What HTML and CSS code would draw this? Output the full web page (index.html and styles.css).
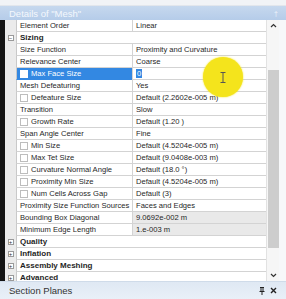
FILE: index.html
```html
<!DOCTYPE html>
<html lang="en">
<head>
  <meta charset="UTF-8">
  <title>Details of "Mesh"</title>
  <link rel="stylesheet" href="styles.css">
</head>
<body>

  <div class="top"></div>
  <div class="titulo">
    <span>Details of "Mesh"</span>
    <span class="pin-claro">&#x2020;</span>
  </div>

  <div class="cuerpo">
    <div class="borde"></div>

    <div class="tabla">
      <div class="fila"><span class="margen"></span><span class="nombre">Element Order</span><span class="valor">Linear</span></div>
      <div class="fila grupo"><span class="margen"><i class="caja">&minus;</i></span><span class="cabecera">Sizing</span></div>
      <div class="fila"><span class="margen"></span><span class="nombre">Size Function</span><span class="valor">Proximity and Curvature</span></div>
      <div class="fila"><span class="margen"></span><span class="nombre">Relevance Center</span><span class="valor">Coarse</span></div>
      <div class="fila activa"><span class="margen"></span><span class="nombre"><i class="check"></i>Max Face Size</span><span class="valor"><b class="sel">0</b></span></div>
      <div class="fila"><span class="margen"></span><span class="nombre">Mesh Defeaturing</span><span class="valor">Yes</span></div>
      <div class="fila"><span class="margen"></span><span class="nombre"><i class="check"></i>Defeature Size</span><span class="valor">Default (2.2602e-005 m)</span></div>
      <div class="fila"><span class="margen"></span><span class="nombre">Transition</span><span class="valor">Slow</span></div>
      <div class="fila"><span class="margen"></span><span class="nombre"><i class="check"></i>Growth Rate</span><span class="valor">Default (1.20 )</span></div>
      <div class="fila"><span class="margen"></span><span class="nombre">Span Angle Center</span><span class="valor">Fine</span></div>
      <div class="fila"><span class="margen"></span><span class="nombre"><i class="check"></i>Min Size</span><span class="valor">Default (4.5204e-005 m)</span></div>
      <div class="fila"><span class="margen"></span><span class="nombre"><i class="check"></i>Max Tet Size</span><span class="valor">Default (9.0408e-003 m)</span></div>
      <div class="fila"><span class="margen"></span><span class="nombre"><i class="check"></i>Curvature Normal Angle</span><span class="valor">Default (18.0 °)</span></div>
      <div class="fila"><span class="margen"></span><span class="nombre"><i class="check"></i>Proximity Min Size</span><span class="valor">Default (4.5204e-005 m)</span></div>
      <div class="fila"><span class="margen"></span><span class="nombre"><i class="check"></i>Num Cells Across Gap</span><span class="valor">Default (3)</span></div>
      <div class="fila"><span class="margen"></span><span class="nombre">Proximity Size Function Sources</span><span class="valor">Faces and Edges</span></div>
      <div class="fila"><span class="margen"></span><span class="nombre">Bounding Box Diagonal</span><span class="valor gris">9.0692e-002 m</span></div>
      <div class="fila"><span class="margen"></span><span class="nombre">Minimum Edge Length</span><span class="valor gris">1.e-003 m</span></div>
      <div class="fila grupo"><span class="margen"><i class="caja">+</i></span><span class="cabecera">Quality</span></div>
      <div class="fila grupo"><span class="margen"><i class="caja">+</i></span><span class="cabecera">Inflation</span></div>
      <div class="fila grupo"><span class="margen"><i class="caja">+</i></span><span class="cabecera">Assembly Meshing</span></div>
      <div class="fila grupo"><span class="margen"><i class="caja">+</i></span><span class="cabecera">Advanced</span></div>
    </div>

    <div class="scroll">
      <svg class="flecha" width="7" height="5" viewBox="0 0 7 5"><path d="M1 4 L3.5 1.5 L6 4" fill="none" stroke="#333" stroke-width="1.2"/></svg>
      <div class="pulgar"></div>
      <svg class="flecha" width="7" height="5" viewBox="0 0 7 5"><path d="M1 1 L3.5 3.5 L6 1" fill="none" stroke="#333" stroke-width="1.2"/></svg>
    </div>
    <div class="resto"></div>
  </div>

  <div class="planos">
    <span>Section Planes</span>
    <span class="iconos">
      <svg width="6" height="8" viewBox="0 0 6 8"><path d="M1 0.5 H5 M2 0.5 V4 M4 0.5 V4 M0.5 4.5 H5.5 M3 4.5 V8" fill="none" stroke="#222" stroke-width="1"/></svg>
      <svg width="7" height="7" viewBox="0 0 7 7"><path d="M1 1 L6 6 M6 1 L1 6" stroke="#222" stroke-width="1.4"/></svg>
    </span>
  </div>

  <!-- resaltado del cursor -->
  <div class="cursor">
    <svg width="6" height="11" viewBox="0 0 6 11"><path d="M0.5 0.5 H5.5 M3 0.5 V10.5 M0.5 10.5 H5.5" fill="none" stroke="#555" stroke-width="1"/></svg>
  </div>

</body>
</html>
```

FILE: styles.css
```css
* { box-sizing: border-box; margin: 0; padding: 0; }
html, body {
  width: 286px; height: 299px; overflow: hidden;
  font-family: "Liberation Sans", Arial, sans-serif;
  font-size: 7.6px; color: #1f1f1f; background: #f3f5f8;
}
body { position: relative; }
i, b { font-style: normal; font-weight: normal; }

.top { height: 6px; background: #f1f3f6; border-bottom: 1px solid #e2e6ec; }
.titulo {
  height: 14px; display: flex; align-items: center; justify-content: space-between;
  padding: 0 8px 0 9px; color: #f4f8fd; font-size: 9.5px;
  background: linear-gradient(#c6d8ee, #b5cce9);
}
.pin-claro { color: #eef4fb; font-size: 7px; }

.cuerpo { display: flex; height: 261px; background: #fff; }
.borde { width: 5px; background: #141414; }

.tabla { width: 261px; overflow: hidden; background: #fff; }
.fila { display: flex; height: 12px; line-height: 11px; }
.margen {
  width: 11px; flex: none; background: #ebebeb;
  display: flex; align-items: center; justify-content: center;
}
.nombre, .valor, .cabecera {
  height: 12px; border-bottom: 1px solid #d3d3d3; white-space: nowrap; overflow: hidden;
}
.nombre {
  width: 116px; flex: none; padding-left: 3px;
  border-left: 1px solid #c9c9c9; display: flex; align-items: center;
}
.valor { width: 134px; flex: none; padding-left: 3px; border-left: 1px solid #d3d3d3; }
.cabecera { flex: 1; padding-left: 3px; border-left: 1px solid #c9c9c9; font-weight: bold; font-size: 8px; }
.gris { background: #e9e9e9; }

.check {
  display: inline-block; width: 8px; height: 8px; margin-right: 3px;
  background: #fff; border: 1px solid #bdbdbd;
}
.caja {
  display: flex; align-items: center; justify-content: center;
  width: 6px; height: 6px; border: 1px solid #9a9a9a; background: #fff;
  font-size: 6px; line-height: 6px; color: #333;
}

.activa .nombre { background: #3388e2; color: #fff; border-bottom-color: #3388e2; }
.activa .check { border-color: #fff; }
.sel { display: inline-block; background: #3388e2; color: #fff; padding: 0 1px; line-height: 9px; }

.scroll {
  width: 13px; display: flex; flex-direction: column; align-items: center;
  background: #f6f6f6; border-left: 1px solid #e2e2e2;
}
.flecha { margin: 3px 0; flex: none; }
.pulgar { width: 11px; margin: 39px 0 22px; flex: 1; background: #cdcdcd; }
.resto { flex: 1; background: #f7f8fa; }

.planos {
  height: 18px; display: flex; align-items: center; justify-content: space-between;
  padding: 0 9px 0 9px; color: #333; font-size: 9.5px;
  background: linear-gradient(#dfe8f3, #e9f0f8);
  border-top: 1px solid #cfdbe9;
}
.iconos { display: flex; gap: 5px; align-items: center; }

.cursor {
  position: absolute; left: 203px; top: 57px; width: 40px; height: 40px;
  border-radius: 50%; background: #f4e41c; box-shadow: 0 0 2px #f4e41c;
  display: flex; align-items: center; justify-content: center;
}
```
